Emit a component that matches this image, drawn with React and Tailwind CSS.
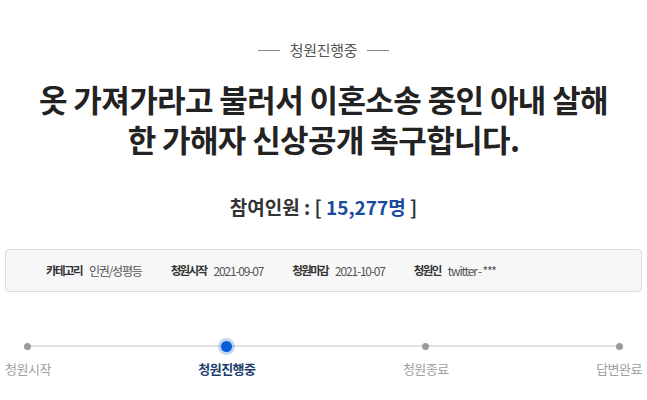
import React from "react";

const font = { fontFamily: '"Noto Sans CJK KR", "Noto Sans", sans-serif' };

function InfoItem({ label, value }) {
  return (
    <div className="flex items-center gap-[7px]">
      <span className="text-[11.5px] font-bold text-[#333] tracking-[-1.6px]">{label}</span>
      <span className="text-[12px] text-[#555] tracking-[-1.2px]">{value}</span>
    </div>
  );
}

const steps = [
  { label: "청원시작", active: false },
  { label: "청원진행중", active: true },
  { label: "청원종료", active: false },
  { label: "답변완료", active: false },
];

export default function App() {
  return (
    <div className="w-[647px] h-[400px] bg-white overflow-hidden" style={font}>
      <div className="pt-[39px] flex items-center justify-center gap-[10px]">
        <span className="block w-[22px] h-px bg-[#888]" />
        <span className="text-[15px] leading-[22px] text-[#555] tracking-[-0.3px]">청원진행중</span>
        <span className="block w-[22px] h-px bg-[#888]" />
      </div>

      <h1 className="mt-[18px] text-center text-[31px] font-bold text-[#222] tracking-[-0.6px]">
        <span className="block leading-[40px]">옷 가져가라고 불러서 이혼소송 중인 아내 살해</span>
        <span className="block leading-[40px]">한 가해자 신상공개 촉구합니다.</span>
      </h1>

      <div className="mt-[34px] text-center text-[19px] leading-[28px] font-bold text-[#333]">
        참여인원 : [ <span className="text-[#1a4b9c]">15,277명</span> ]
      </div>

      <div className="mx-[5px] mt-[28px] h-[43px] rounded-[4px] border border-[#dcdcdc] bg-[#f7f7f7] flex items-center pl-[40px] gap-[29px]">
        <InfoItem label="카테고리" value="인권/성평등" />
        <InfoItem label="청원시작" value="2021-09-07" />
        <InfoItem label="청원마감" value="2021-10-07" />
        <InfoItem label="청원인" value="twitter - ***" />
      </div>

      <div className="relative mx-[5px] mt-[48px]">
        <div className="absolute left-[20px] right-[21px] top-[5px] h-[2px] bg-[#e2e2e2]" />
        <div className="relative flex justify-between">
          {steps.map((s) => (
            <div key={s.label} className="flex flex-col items-center">
              <div className="h-[12px] flex items-center justify-center">
                {s.active ? (
                  <span className="block w-[11px] h-[11px] rounded-full bg-[#0a5bd6] shadow-[0_0_0_3px_rgba(10,91,214,0.25)]" />
                ) : (
                  <span className="block w-[7px] h-[7px] rounded-full bg-[#9a9a9a]" />
                )}
              </div>
              <span
                className={
                  s.active
                    ? "mt-[8px] text-[13px] leading-[18px] font-bold text-[#1c3d6e] tracking-[-0.5px]"
                    : "mt-[8px] text-[13px] leading-[18px] text-[#a0a0a0] tracking-[-0.5px]"
                }
              >
                {s.label}
              </span>
            </div>
          ))}
        </div>
      </div>
    </div>
  );
}
